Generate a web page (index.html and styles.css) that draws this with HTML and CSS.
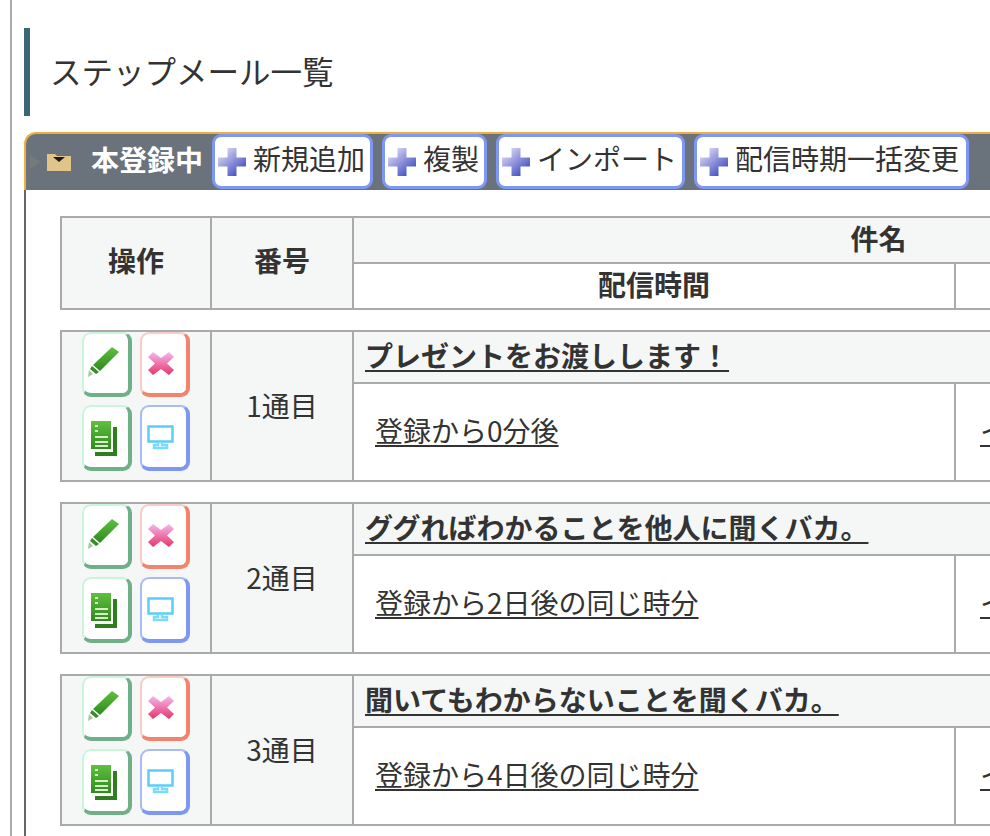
FILE: index.html

```html
<!DOCTYPE html>
<html lang="ja">
<head>
    <meta charset="UTF-8">
    <title>ステップメール一覧</title>
    <link rel="stylesheet" href="styles.css">
</head>
<body>
    <svg class="defs" width="0" height="0">
        <defs>
            <linearGradient id="plusFill" x1="0" y1="0.2" x2="0.7" y2="1">
                <stop offset="0" stop-color="#dcd8f4"/>
                <stop offset="1" stop-color="#4450c2"/>
            </linearGradient>
            <linearGradient id="crossFill" x1="0" y1="0" x2="0" y2="1">
                <stop offset="0" stop-color="#f2b8ee"/>
                <stop offset="1" stop-color="#e8346c"/>
            </linearGradient>
            <linearGradient id="greenFill" x1="0" y1="0" x2="0" y2="1">
                <stop offset="0" stop-color="#5fc03e"/>
                <stop offset="1" stop-color="#2f8a1e"/>
            </linearGradient>
            <symbol id="plus" viewBox="0 0 28 28">
                <path d="M9.5 0h9v9.5H28v9h-9.5V28h-9v-9.5H0v-9h9.5z" fill="url(#plusFill)"/>
            </symbol>
            <symbol id="edit" viewBox="0 0 44 60">
                <path d="M28 13l7 5-19 19-7-6z" fill="url(#greenFill)"/>
                <path d="M8 32l7 6-3 2-6-5z" fill="#3c8a2a"/>
                <path d="M5 36l4 4-5 3z" fill="#a5c79c"/>
            </symbol>
            <symbol id="del" viewBox="0 0 44 60">
                <path d="M11 18l8 6 8-6 5 5-7 6.500 7 6.500-5 5-8-6-8 6-5-5 7-6.500-7-6.500z" fill="url(#crossFill)"/>
            </symbol>
            <symbol id="copy" viewBox="0 0 44 60">
                <path d="M11 20h22v29H11z" fill="#2f7d1c"/>
                <path d="M7 14h22v31H7z" fill="#fff"/>
                <path d="M7 14h20v28H7z" fill="url(#greenFill)"/>
                <path d="M11 18h3v2h-3zM11 23h3v2h-3zM11 29h13v2H11zM11 34h13v2H11zM11 38h13v2H11z" fill="#d6efc8"/>
            </symbol>
            <symbol id="preview" viewBox="0 0 44 60">
                <path d="M6.500 19.500h24v15h-24z" fill="none" stroke="#5ccdf8" stroke-width="2.500"/>
                <path d="M16 35v3h-4v3h13v-3h-5v-3" fill="none" stroke="#7adcfb" stroke-width="2.500"/>
            </symbol>
        </defs>
    </svg>

    <div class="page">
        <h1 class="page-title">ステップメール一覧</h1>

        <section class="panel">
            <div class="panel-head">
                <span class="arrow"></span>
                <svg class="folder" width="24" height="18" viewBox="0 0 24 18">
                    <path d="M0 1h8l2 2h14v15H0z" fill="#e0c48a"/>
                    <path d="M6 4h12l-6 5z" fill="#1d1a14"/>
                </svg>
                <span class="panel-name">本登録中</span>
                <div class="panel-btns">
                    <a class="add-btn"><svg class="plus"><use href="#plus"/></svg>新規追加</a>
                    <a class="add-btn"><svg class="plus"><use href="#plus"/></svg>複製</a>
                    <a class="add-btn"><svg class="plus"><use href="#plus"/></svg>インポート</a>
                    <a class="add-btn"><svg class="plus"><use href="#plus"/></svg>配信時期一括変更</a>
                </div>
            </div>

            <div class="panel-body">
                <table class="mail-table">
                    <colgroup><col class="c-op"><col class="c-no"><col class="c-time"><col class="c-rest"></colgroup>
                    <tr class="head-top">
                        <th rowspan="2" class="gray tall">操作</th>
                        <th rowspan="2" class="gray tall">番号</th>
                        <th colspan="2" class="gray">件名</th>
                    </tr>
                    <tr class="head-sub">
                        <th>配信時間</th>
                        <th></th>
                    </tr>
                </table>

                <table class="mail-table">
                    <colgroup><col class="c-op"><col class="c-no"><col class="c-time"><col class="c-rest"></colgroup>
                    <tr class="row-title">
                        <td rowspan="2" class="gray ops">
                            <div class="op-grid">
                                <a class="op green"><svg><use href="#edit"/></svg></a>
                                <a class="op red"><svg><use href="#del"/></svg></a>
                                <a class="op green"><svg><use href="#copy"/></svg></a>
                                <a class="op blue"><svg><use href="#preview"/></svg></a>
                            </div>
                        </td>
                        <td rowspan="2" class="gray num">1通目</td>
                        <td colspan="2" class="gray subject"><a>プレゼントをお渡しします！</a></td>
                    </tr>
                    <tr class="row-body">
                        <td class="time"><a>登録から0分後</a></td>
                        <td class="time rest"><a>イ</a></td>
                    </tr>
                </table>

                <table class="mail-table">
                    <colgroup><col class="c-op"><col class="c-no"><col class="c-time"><col class="c-rest"></colgroup>
                    <tr class="row-title">
                        <td rowspan="2" class="gray ops">
                            <div class="op-grid">
                                <a class="op green"><svg><use href="#edit"/></svg></a>
                                <a class="op red"><svg><use href="#del"/></svg></a>
                                <a class="op green"><svg><use href="#copy"/></svg></a>
                                <a class="op blue"><svg><use href="#preview"/></svg></a>
                            </div>
                        </td>
                        <td rowspan="2" class="gray num">2通目</td>
                        <td colspan="2" class="gray subject"><a>ググればわかることを他人に聞くバカ。</a></td>
                    </tr>
                    <tr class="row-body">
                        <td class="time"><a>登録から2日後の同じ時分</a></td>
                        <td class="time rest"><a>イ</a></td>
                    </tr>
                </table>

                <table class="mail-table">
                    <colgroup><col class="c-op"><col class="c-no"><col class="c-time"><col class="c-rest"></colgroup>
                    <tr class="row-title">
                        <td rowspan="2" class="gray ops">
                            <div class="op-grid">
                                <a class="op green"><svg><use href="#edit"/></svg></a>
                                <a class="op red"><svg><use href="#del"/></svg></a>
                                <a class="op green"><svg><use href="#copy"/></svg></a>
                                <a class="op blue"><svg><use href="#preview"/></svg></a>
                            </div>
                        </td>
                        <td rowspan="2" class="gray num">3通目</td>
                        <td colspan="2" class="gray subject"><a>聞いてもわからないことを聞くバカ。</a></td>
                    </tr>
                    <tr class="row-body">
                        <td class="time"><a>登録から4日後の同じ時分</a></td>
                        <td class="time rest"><a>イ</a></td>
                    </tr>
                </table>
            </div>
        </section>
    </div>
</body>
</html>
```

FILE: styles.css

```css
* {
    margin: 0;
    padding: 0;
    box-sizing: border-box;
}

html, body {
    height: 100%;
    overflow: hidden;
}

body {
    font-family: "Noto Sans CJK JP", "Liberation Sans", sans-serif;
    color: #333;
    background: #fff;
}

.defs {
    position: absolute;
}

.page {
    width: 1500px;
    height: 836px;
    margin-left: 10px;
    padding: 28px 0 0 12px;
    border-left: 2px solid #aaa;
}

.page-title {
    height: 88px;
    padding-left: 20px;
    border-left: 6px solid #3b6773;
    font-size: 31.5px;
    font-weight: 400;
    line-height: 84px;
    margin-bottom: 16px;
}

.panel {
    width: 1440px;
}

.panel-head {
    display: flex;
    align-items: center;
    height: 58px;
    background: #6a737b;
    border-top: 2px solid #f0ad40;
    border-left: 2px solid #f0ad40;
    border-top-left-radius: 12px;
}

.arrow {
    width: 0;
    height: 0;
    margin: 0 6px 0 4px;
    border-left: 11px solid #757a7c;
    border-top: 7px solid transparent;
    border-bottom: 7px solid transparent;
}

.folder {
    flex: none;
    margin-right: 20px;
    filter: blur(0.4px);
}

.panel-name {
    font-size: 28px;
    font-weight: 700;
    color: #fff;
    margin-right: 9px;
    padding-bottom: 7px;
}

.panel-btns {
    display: flex;
    gap: 9px;
    align-self: flex-start;
}

.add-btn {
    display: flex;
    align-items: center;
    height: 55px;
    padding: 0 5px 7px 3px;
    background: #fff;
    border: 3px solid #7f97f4;
    border-radius: 9px;
    font-size: 28px;
    line-height: 1;
    color: #333;
    white-space: nowrap;
}

.add-btn:last-child {
    padding-right: 7px;
}

.plus {
    flex: none;
    width: 28px;
    height: 28px;
    margin-right: 7px;
    margin-top: 7px;
    filter: blur(0.5px);
}

.panel-body {
    border-left: 2px solid #666;
    padding: 26px 0 10px 34px;
}

.mail-table {
    width: 1345px;
    table-layout: fixed;
    border-collapse: collapse;
    margin-bottom: 20px;
    font-size: 28px;
}

.mail-table:last-child {
    margin-bottom: 0;
}

.mail-table th, .mail-table td {
    border: 2px solid #aaa;
}

.c-op { width: 150px; }
.c-no { width: 142px; }
.c-time { width: 602px; }

.gray {
    background: #f5f7f6;
}

.head-top, .head-sub {
    height: 46px;
}

.mail-table th {
    font-size: 28px;
    line-height: 1;
    font-weight: 700;
    padding-bottom: 4px;
}

.mail-table th.tall {
    padding-bottom: 6px;
}

.row-title {
    height: 52px;
}

.row-body {
    height: 98px;
}

.ops {
    padding: 0;
    vertical-align: top;
}

.op-grid {
    display: grid;
    grid-template-columns: 50px 50px;
    grid-template-rows: 65px 66px;
    gap: 8px;
    justify-content: center;
}

.op {
    display: block;
    background: #fff;
    border-style: solid;
    border-width: 2px 4px 4px 2px;
    border-radius: 9px;
}

.op svg {
    display: block;
    width: 44px;
    height: 60px;
    filter: blur(0.5px);
}

.op.green {
    border-color: #c8f5dc #6fb088 #6fb088 #c8f5dc;
}

.op.red {
    border-color: #f8cdc8 #f2846d #f2846d #f8cdc8;
}

.op.blue {
    border-color: #a9baf8 #7f97f4 #7f97f4 #a9baf8;
}

.num {
    text-align: center;
    font-size: 28px;
    line-height: 1;
    padding-bottom: 3px;
}

.subject {
    padding: 0 0 4px 11px;
    font-weight: 700;
    line-height: 1;
}

.subject a, .time a {
    text-decoration: underline;
    text-underline-offset: 3px;
}

.time {
    padding: 0 0 4px 21px;
    font-size: 28px;
    line-height: 1;
    vertical-align: middle;
}

.time.rest {
    padding-left: 24px;
}
```
